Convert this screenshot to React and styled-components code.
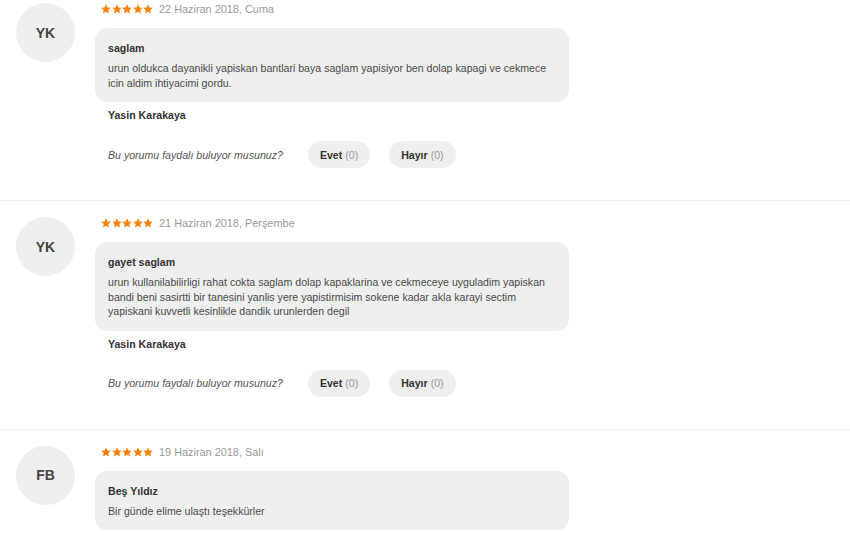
import React from "react";
import styled, { createGlobalStyle } from "styled-components";

const GlobalStyle = createGlobalStyle`
    body {
        margin: 0;
        background: #fff;
        font-family: "Liberation Sans", Arial, sans-serif;
        color: #333;
    }
`;

const reviews = [
    {
        initials: "YK",
        date: "22 Haziran 2018, Cuma",
        title: "saglam",
        text: "urun oldukca dayanikli yapiskan bantlari baya saglam yapisiyor ben dolap kapagi ve cekmece icin aldim ihtiyacimi gordu.",
        author: "Yasin Karakaya",
    },
    {
        initials: "YK",
        date: "21 Haziran 2018, Perşembe",
        title: "gayet saglam",
        text: "urun kullanilabilirligi rahat cokta saglam dolap kapaklarina ve cekmeceye uyguladim yapiskan bandi beni sasirtti bir tanesini yanlis yere yapistirmisim sokene kadar akla karayi sectim yapiskani kuvvetli kesinlikle dandik urunlerden degil",
        author: "Yasin Karakaya",
    },
    {
        initials: "FB",
        date: "19 Haziran 2018, Salı",
        title: "Beş Yıldız",
        text: "Bir günde elime ulaştı teşekkürler",
        author: "F B",
    },
];

// the page is scrolled: the list starts a little above the top edge
// and the third review is cut right under its bubble
const List = styled.div`
    margin-top: -13px;
    height: 546px;
    overflow: hidden;
`;

const Review = styled.div`
    display: flex;
    gap: 20px;
    padding: 15px 0 32px 16px;
    border-bottom: 1px solid #efefef;
`;

const Avatar = styled.div`
    flex: none;
    width: 59px;
    height: 59px;
    margin-top: 1px;
    border-radius: 50%;
    background: #efefef;
    display: flex;
    align-items: center;
    justify-content: center;
    font-size: 14px;
    font-weight: bold;
    color: #444;
`;

const Content = styled.div`
    width: 474px;
`;

const Meta = styled.div`
    display: flex;
    align-items: center;
    height: 14px;
    padding-left: 6px;
    gap: 6px;
`;

const Stars = styled.div`
    display: flex;
    gap: 0.5px;
`;

const DateText = styled.span`
    font-size: 10.9px;
    color: #999;
`;

const Bubble = styled.div`
    margin-top: 12px;
    background: #efefef;
    border-radius: 12px;
    padding: 13px 13px 12px;
`;

const Title = styled.div`
    font-size: 10.6px;
    line-height: 15px;
    font-weight: bold;
    color: #333;
    margin-bottom: 5px;
`;

const Body = styled.div`
    font-size: 10.6px;
    line-height: 14.5px;
    color: #4a4a4a;
`;

const Author = styled.div`
    margin-top: 6px;
    padding-left: 13px;
    font-size: 10.6px;
    line-height: 15px;
    font-weight: bold;
    color: #333;
`;

const Feedback = styled.div`
    display: flex;
    align-items: center;
    margin-top: 18px;
    padding-left: 13px;
`;

const Question = styled.span`
    font-size: 10.6px;
    font-style: italic;
    color: #555;
    margin-right: 25px;
`;

const VoteButton = styled.button`
    height: 27px;
    padding: 0 12px;
    margin-right: 19px;
    border: none;
    border-radius: 14px;
    background: #efefef;
    font-family: inherit;
    font-size: 10.6px;
    font-weight: bold;
    color: #333;
    cursor: pointer;

    span {
        font-weight: normal;
        color: #999;
    }
`;

function Star() {
    return (
        <svg width="10" height="10" viewBox="0 0 24 24">
            <path
                d="M12 0.8l3.4 7.4 8.1.9-6 5.5 1.7 8.1L12 18.6l-7.2 4.1 1.7-8.1-6-5.5 8.1-.9z"
                fill="#f5820a"
            />
        </svg>
    );
}

function ReviewItem({ review }) {
    return (
        <Review>
            <Avatar>{review.initials}</Avatar>
            <Content>
                <Meta>
                    <Stars>
                        {[0, 1, 2, 3, 4].map((i) => (
                            <Star key={i} />
                        ))}
                    </Stars>
                    <DateText>{review.date}</DateText>
                </Meta>
                <Bubble>
                    <Title>{review.title}</Title>
                    <Body>{review.text}</Body>
                </Bubble>
                <Author>{review.author}</Author>
                <Feedback>
                    <Question>Bu yorumu faydalı buluyor musunuz?</Question>
                    <VoteButton>
                        Evet <span>(0)</span>
                    </VoteButton>
                    <VoteButton>
                        Hayır <span>(0)</span>
                    </VoteButton>
                </Feedback>
            </Content>
        </Review>
    );
}

export default function App() {
    return (
        <>
            <GlobalStyle />
            <List>
                {reviews.map((review, i) => (
                    <ReviewItem key={i} review={review} />
                ))}
            </List>
        </>
    );
}
